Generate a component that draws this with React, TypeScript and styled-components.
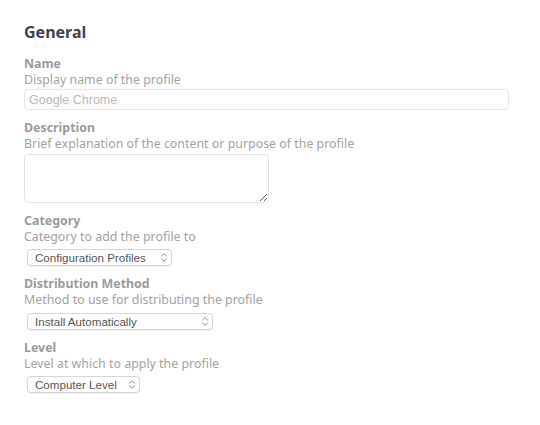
import styled, { createGlobalStyle } from 'styled-components';

const GlobalStyle = createGlobalStyle`
  html, body {
    margin: 0;
    padding: 0;
    background: #ffffff;
  }
  body {
    font-family: "Noto Sans", "DejaVu Sans", sans-serif;
  }
`;

const Page = styled.div`
  padding: 22px 24px 24px 24px;
  width: 540px;
  box-sizing: border-box;
`;

const Heading = styled.h2`
  margin: 0 0 14px 0;
  font-size: 16px;
  line-height: 20px;
  font-weight: 700;
  color: #3d444e;
`;

const Field = styled.div`
  display: flex;
  flex-direction: column;
  align-items: flex-start;
  margin-bottom: 10px;
`;

const Label = styled.div`
  font-size: 12.4px;
  line-height: 16px;
  font-weight: 700;
  color: #9b9b9b;
`;

const Hint = styled.div`
  font-size: 12.4px;
  line-height: 16px;
  color: #a3a3a3;
`;

const TextInput = styled.input`
  display: block;
  box-sizing: border-box;
  margin: 1px 0 0 0;
  width: 485px;
  height: 21px;
  padding: 0 4px;
  border: 1px solid #e6e6e6;
  border-radius: 4px;
  font-family: "Liberation Sans", Arial, sans-serif;
  font-size: 12.5px;
  color: #555;
  outline: none;

  &::placeholder {
    color: #b8b8b8;
  }
`;

const TextArea = styled.textarea`
  display: block;
  box-sizing: border-box;
  margin: 2px 0 0 0;
  width: 245px;
  height: 49px;
  padding: 4px 5px;
  border: 1px solid #e2e2e2;
  border-radius: 4px;
  font-family: "Liberation Sans", Arial, sans-serif;
  font-size: 12px;
  outline: none;
`;

const SelectWrap = styled.div<{ $width: number; $top: number }>`
  position: relative;
  margin-top: ${p => p.$top}px;
  margin-left: 3px;
  width: ${p => p.$width}px;
  height: 17px;
`;

const Select = styled.select`
  display: block;
  appearance: none;
  -webkit-appearance: none;
  box-sizing: border-box;
  width: 100%;
  height: 17px;
  margin: 0;
  padding: 0 18px 0 7px;
  border: 1px solid #d6d6d6;
  border-radius: 4px;
  background: #ffffff;
  box-shadow: 0 0.5px 1px rgba(0, 0, 0, 0.06);
  font-family: "Liberation Sans", Arial, sans-serif;
  font-size: 11.6px;
  line-height: 15px;
  color: #555555;
  outline: none;
`;

const Chevron = styled.svg`
  position: absolute;
  right: 4px;
  top: 3px;
  pointer-events: none;
`;

function UpDown() {
  return (
    <Chevron width="8" height="11" viewBox="0 0 8 11">
      <path d="M1.5 4.2 L4 1.6 L6.5 4.2" fill="none" stroke="#8c8c8c" strokeWidth="1" strokeLinecap="round" strokeLinejoin="round" />
      <path d="M1.5 6.8 L4 9.4 L6.5 6.8" fill="none" stroke="#8c8c8c" strokeWidth="1" strokeLinecap="round" strokeLinejoin="round" />
    </Chevron>
  );
}

function Dropdown({ width, top, options }: { width: number; top: number; options: string[] }) {
  return (
    <SelectWrap $width={width} $top={top}>
      <Select defaultValue={options[0]}>
        {options.map(o => (
          <option key={o}>{o}</option>
        ))}
      </Select>
      <UpDown />
    </SelectWrap>
  );
}

export default function App() {
  return (
    <>
      <GlobalStyle />
      <Page>
        <Heading>General</Heading>

        <Field>
          <Label>Name</Label>
          <Hint>Display name of the profile</Hint>
          <TextInput placeholder="Google Chrome" />
        </Field>

        <Field>
          <Label>Description</Label>
          <Hint>Brief explanation of the content or purpose of the profile</Hint>
          <TextArea />
        </Field>

        <Field>
          <Label>Category</Label>
          <Hint>Category to add the profile to</Hint>
          <Dropdown width={145} top={4} options={['Configuration Profiles', 'No Category']} />
        </Field>

        <Field>
          <Label>Distribution Method</Label>
          <Hint>Method to use for distributing the profile</Hint>
          <Dropdown width={186} top={5} options={['Install Automatically', 'Make Available in Self Service']} />
        </Field>

        <Field>
          <Label>Level</Label>
          <Hint>Level at which to apply the profile</Hint>
          <Dropdown width={113} top={4} options={['Computer Level', 'User Level']} />
        </Field>
      </Page>
    </>
  );
}
